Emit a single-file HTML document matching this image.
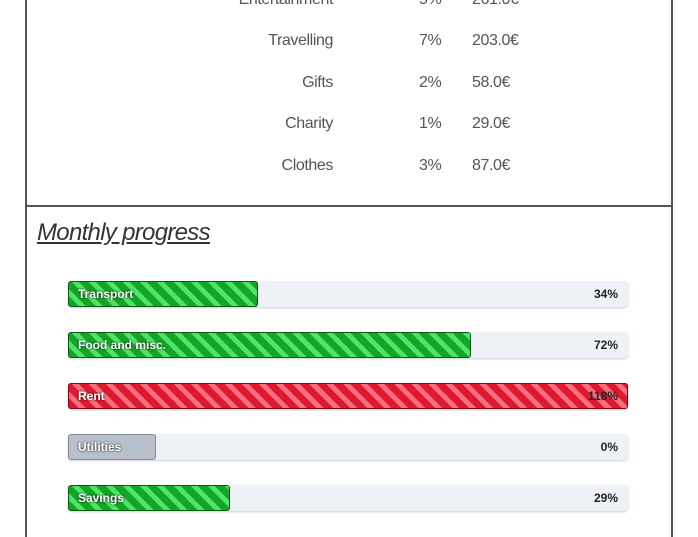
<!DOCTYPE html>
<html><head><style>
body{margin:0;width:698px;height:527px;background:#fff;position:relative;overflow:hidden;font-family:"Liberation Sans",sans-serif;color:#333}
.box{position:absolute;left:25px;width:644px;border-left:2px solid #555;border-right:2px solid #555}
.t{position:absolute;font-size:16px;color:#555;letter-spacing:-0.4px}
.l{right:365px;text-align:right}
.p{left:419px}
.v{left:472px}
.bar{position:absolute;left:68px;width:560px;height:26px;border-radius:4px;background:#eef1f6;box-shadow:0 1px 2px #ccd}
.f{position:absolute;left:0;top:0;height:26px;border-radius:3px;border:1px solid #0a5a10;box-sizing:border-box;
background:repeating-linear-gradient(45deg,#13a523 0 7px,#4ee36c 7px 12px)}
.f span{position:absolute;left:9px;top:5px;color:#fff;font-weight:bold;font-size:12px;text-shadow:0 0 2px #000;white-space:nowrap}
.pc{position:absolute;right:10px;top:6px;font-weight:bold;font-size:12px;color:#222}
</style></head><body>
<div class="box" style="top:0;height:205px;border-bottom:2px solid #555"></div>
<div class="box" style="top:207px;height:330px"></div>
<div class="t l" style="top:-9px">Entertainment</div><div class="t p" style="top:-9px">5%</div><div class="t v" style="top:-9px">261.0€</div>
<div class="t l" style="top:32px">Travelling</div><div class="t p" style="top:32px">7%</div><div class="t v" style="top:32px">203.0€</div>
<div class="t l" style="top:74px">Gifts</div><div class="t p" style="top:74px">2%</div><div class="t v" style="top:74px">58.0€</div>
<div class="t l" style="top:115px">Charity</div><div class="t p" style="top:115px">1%</div><div class="t v" style="top:115px">29.0€</div>
<div class="t l" style="top:157px">Clothes</div><div class="t p" style="top:157px">3%</div><div class="t v" style="top:157px">87.0€</div>
<div style="position:absolute;left:37px;top:219px;font-size:24px;font-style:italic;text-decoration:underline;color:#333;letter-spacing:-0.7px">Monthly progress</div>
<div class="bar" style="top:281px"><div class="f" style="width:190px"><span>Transport</span></div><div class="pc">34%</div></div>
<div class="bar" style="top:332px"><div class="f" style="width:403px"><span>Food and misc.</span></div><div class="pc">72%</div></div>
<div class="bar" style="top:383px"><div class="f" style="width:560px;border-color:#8a0010;background:repeating-linear-gradient(45deg,#e0182e 0 7px,#f5707e 7px 12px)"><span>Rent</span></div><div class="pc">118%</div></div>
<div class="bar" style="top:434px"><div class="f" style="width:88px;border-color:#889;background:#b8c0cc"><span>Utilities</span></div><div class="pc">0%</div></div>
<div class="bar" style="top:485px"><div class="f" style="width:162px"><span>Savings</span></div><div class="pc">29%</div></div>
</body></html>
